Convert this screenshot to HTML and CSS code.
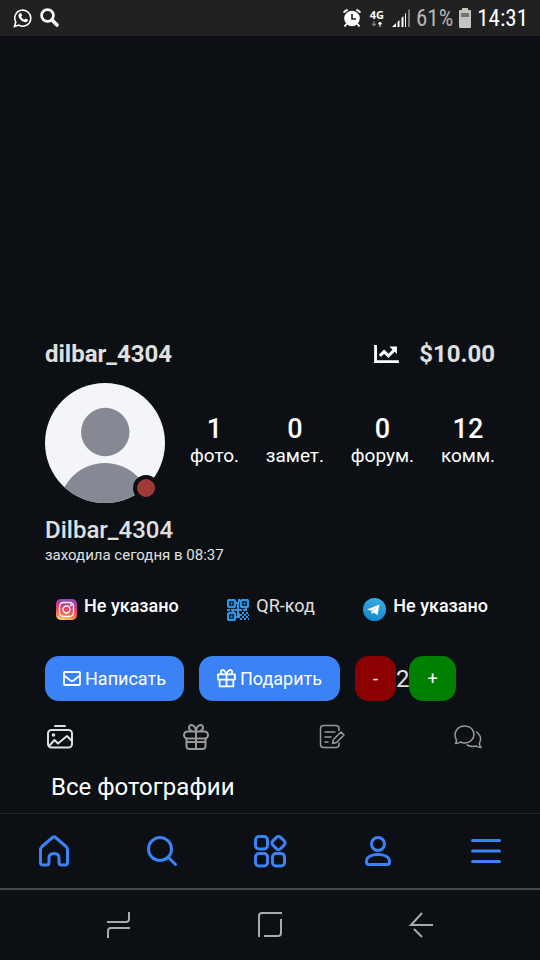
FILE: index.html
```html
<!DOCTYPE html>
<html lang="ru">
<head>
<meta charset="utf-8">
<meta name="viewport" content="width=device-width, initial-scale=1">
<title>dilbar_4304</title>
<link rel="stylesheet" href="styles.css">
</head>
<body>
<header class="status">
  <div class="status-group">
    <svg width="20" height="20" viewBox="0 0 20 20" fill="none" stroke="#fff" stroke-width="1.6"><path d="M1.500 18.500l1.300-4.400a8 8 0 1 1 3 3z"/><path d="M6.800 5.200l1.300-.2 1.100 2.600-1 1.100c.8 1.500 1.700 2.300 3.200 3l1.100-1.200 2.500 1.200c-.1 1.700-1.200 2.600-2.800 2.500C8.400 13.600 5.300 10.200 5.500 7c.1-.8.600-1.500 1.300-1.800z" fill="#fff" stroke="none"/></svg>
    <svg width="20" height="20" viewBox="0 0 20 20" fill="none" stroke="#fff"><circle cx="7.500" cy="7.500" r="5.900" stroke-width="2.700"/><path d="M12 12l5 5" stroke-width="3.700" stroke-linecap="round"/></svg>
  </div>
  <div class="status-group right">
    <svg width="20" height="20" viewBox="0 0 20 20"><circle cx="10" cy="10.500" r="7.800" fill="#fff"/><path d="M4.500 16l-2 2.500M15.500 16l2 2.500M1.500 4.500l4-3M18.500 4.500l-4-3" stroke="#fff" stroke-width="2"/><path d="M10 6v5h4" stroke="#212121" stroke-width="1.600" fill="none"/></svg>
    <div class="network"><span>4G</span>
      <svg width="12" height="6" viewBox="0 0 12 6"><path d="M3 0v3M1.500 3h3L3 5z" stroke="#888" fill="#888"/><path d="M9 6V3M7.500 3L9 1l1.500 2z" stroke="#fff" fill="#fff"/></svg>
    </div>
    <svg width="18" height="18" viewBox="0 0 18 18"><path d="M0 18l4-4v4zM5.500 13l2-2v7h-2zM9.500 9l2-2v11h-2zM13 5l1-1v14h-1z" fill="#fff"/><path d="M16 1l2-1v18h-2z" fill="#777"/></svg>
    <span class="percent">61%</span>
    <svg width="12" height="20" viewBox="0 0 12 20"><path d="M3 0h6v2h2q1 0 1 1v16q0 1-1 1H1q-1 0-1-1V3q0-1 1-1h2z" fill="#c4c4c4"/><path d="M2 5h8v4H2z" fill="#737373"/></svg>
    <time class="clock">14:31</time>
  </div>
</header>
<div class="cover"></div>
<main class="profile">
  <div class="title-row">
    <h1 class="login">dilbar_4304</h1>
    <a class="balance" href="#">
      <svg width="25" height="19" viewBox="0 0 26 20" fill="none" stroke="#fff"><path d="M1.500 0v17.500H26" stroke-width="3"/><path d="M6 11.500l4.500-4.500 4.500 4.500 6-6" stroke-width="3.200"/><path d="M16 1.500h8v8z" fill="#fff" stroke="none"/></svg>
      <span>$10.00</span>
    </a>
  </div>
  <div class="summary">
    <div class="avatar">
      <svg class="portrait" viewBox="0 0 120 120"><circle cx="60" cy="60" r="60" fill="#f3f5f8"/><clipPath id="face"><circle cx="60" cy="60" r="60"/></clipPath><g clip-path="url(#face)" fill="#848993"><circle cx="60.300" cy="49" r="24.200"/><circle cx="60" cy="126" r="46"/></g></svg>
      <span class="offline"></span>
    </div>
    <ul class="stats">
      <li><b>1</b><span>фото.</span></li>
      <li><b>0</b><span>замет.</span></li>
      <li><b>0</b><span>форум.</span></li>
      <li><b>12</b><span>комм.</span></li>
    </ul>
  </div>
  <h2 class="name">Dilbar_4304</h2>
  <p class="visited">заходила сегодня в 08:37</p>
  <div class="contacts">
    <a href="#">
      <svg width="21" height="21" viewBox="0 0 21 21"><defs><linearGradient id="igv" x1="0.600" y1="0" x2="0.400" y2="1"><stop offset="0" stop-color="#8a4bc4"/><stop offset=".35" stop-color="#d0387f"/><stop offset=".65" stop-color="#ee5a50"/><stop offset=".85" stop-color="#f9904a"/><stop offset="1" stop-color="#fed373"/></linearGradient></defs><rect width="21" height="21" rx="5" fill="url(#igv)"/><g fill="none" stroke="#fff" stroke-width="1.400"><rect x="3.500" y="3.500" width="14" height="14" rx="4"/><circle cx="10.500" cy="10.500" r="3.500"/></g><circle cx="14.800" cy="6.200" r="1" fill="#fff"/></svg>
      <span class="strong">Не указано</span>
    </a>
    <a href="#">
      <svg width="22" height="22" viewBox="0 0 22 22" fill="none" stroke="#3095e6" stroke-width="2"><rect x="1" y="1" width="7" height="7" rx="1.500" stroke-width="2.400"/><rect x="14" y="1" width="7" height="7" rx="1.500" stroke-width="2.400"/><rect x="1" y="14" width="7" height="7" rx="1.500" stroke-width="2.400"/><path d="M3.500 4.500h2M16.500 4.500h2M3.500 17.500h2M12 0v3M9 4h3M11 5v5M0 11h3M4 11h11M6 10v3M16 11h4M19 9v3M11 12v5M9 18h4M12 14v3M15 14h2M19 14h2M17 16h2M21 16h1M15 18h2M19 18h2M17 20h2M21 20h1M13 20h2M13 16h2"/></svg>
      <span>QR-код</span>
    </a>
    <a href="#">
      <svg width="23" height="23" viewBox="0 0 23 23"><defs><linearGradient id="tg" x1=".7" y1="0" x2=".4" y2="1"><stop offset="0" stop-color="#37aee2"/><stop offset="1" stop-color="#1687d0"/></linearGradient></defs><circle cx="11.500" cy="11.500" r="11.500" fill="url(#tg)"/><path d="M4 11.500L16.500 6.500 14.500 17.300 10.800 14.500 9 16.300 8.300 12.800z" fill="#fff"/><path d="M8.300 12.800l6-4-4.500 5L9 16.300z" fill="#b9d9ef"/></svg>
      <span class="strong">Не указано</span>
    </a>
  </div>
  <div class="actions">
    <button class="btn" type="button">
      <svg width="18" height="18" viewBox="0 0 18 18" fill="none" stroke="#fff" stroke-width="1.800" stroke-linejoin="round"><rect x="1" y="2" width="16" height="13" rx="1"/><path d="M1 5.500l6.500 5q1.500 1 3 0L17 5.500"/></svg>Написать</button>
    <button class="btn" type="button">
      <svg width="19" height="19" viewBox="0 0 18 18" fill="none" stroke="#fff" stroke-width="1.700" stroke-linejoin="round"><path d="M1 5h16v5H1zM2.500 10v6.500h13V10M9 5v11.500M9 5H5Q2.500 3 4.500 1.200 7 0 9 5q2-5 4.500-3.800Q15.500 3 13 5"/></svg>Подарить</button>
    <div class="rating">
      <button class="btn minus" type="button">-</button><output>2</output><button class="btn plus" type="button">+</button>
    </div>
  </div>
  <div class="tabs">
    <button type="button" class="tab current" aria-label="Фото"><svg viewBox="0 0 28 28"><rect x="2" y="7" width="24" height="17.500" rx="3.500"/><path d="M9 3h10M3 23l5.500-6 3.500 3.500L21 13l5 5"/><circle cx="7.500" cy="12" r=".8"/></svg></button>
    <button type="button" class="tab bold" aria-label="Подарки"><svg viewBox="0 0 28 28"><rect x="2" y="8.500" width="24" height="7" rx="3.500"/><path d="M4.500 16v7q0 3 3 3h13q3 0 3-3v-7M14 8.500V26M4.500 19h19M9.500 8C5.500 5.500 7 2 9.500 2 12.500 2 14 6 14 8c0-2 1.500-6 4.500-6 2.500 0 4 3.500 0 6"/></svg></button>
    <button type="button" class="tab" aria-label="Заметки"><svg viewBox="0 0 28 28"><path d="M21 7.500V5.500Q21 2.500 18 2.500H5.500q-3 0-3 3v16q0 3 3 3H18q3 0 3-3V20M7 9h10M7 14h6M7 19h3M15.500 16.500L23 9l3 3-7.500 7.500-4 1z"/></svg></button>
    <button type="button" class="tab" aria-label="Комментарии"><svg viewBox="0 0 28 28"><path d="M1.500 20.500c2-2 1-3-.2-6.500C0 8 4.500 3 10.500 3S20 7 20 11.500 16 20 10.500 20q-2 0-4-1-2 1.500-5 1.500zM22.500 9c4 3 5 7 3 11-.3 2 .3 3 1.500 4.500-2 0-3.500-.5-5-1.500-3 1-6 .5-9-1"/></svg></button>
  </div>
  <h3 class="section-title">Все фотографии</h3>
</main>
<nav class="appnav">
  <a href="#" aria-label="Главная"><svg viewBox="0 0 36 36"><path d="M4.500 17Q4.500 15 6 13.500L16.500 4.500q1.500-1.300 3 0L30 13.500q1.500 1.500 1.500 3.500v12.500q0 2.500-2.500 2.500h-3.500q-2.500 0-2.500-2.500V25q0-4.500-5-4.500T13 25v4.500q0 2.500-2.500 2.500H7q-2.500 0-2.500-2.500z"/></svg></a>
  <a href="#" aria-label="Поиск"><svg viewBox="0 0 36 36"><circle cx="16" cy="16" r="11.500"/><path d="M24.500 24.500l7 7"/></svg></a>
  <a href="#" aria-label="Разделы"><svg viewBox="0 0 36 36"><rect x="3.500" y="3.500" width="12" height="12.500" rx="3.500"/><rect x="3.500" y="20.500" width="12" height="12.500" rx="3.500"/><rect x="20.500" y="20.500" width="12" height="12.500" rx="3.500"/><rect x="21" y="4.500" width="11" height="11" rx="3" transform="rotate(45 26.500 10)"/></svg></a>
  <a href="#" aria-label="Профиль"><svg viewBox="0 0 36 36"><circle cx="18" cy="11" r="6.500"/><path d="M6.500 28.500c0-4.500 5-7 11.500-7s11.500 2.500 11.500 7v1q0 2-2.500 2H9q-2.500 0-2.500-2z"/></svg></a>
  <a href="#" aria-label="Меню"><svg viewBox="0 0 36 36"><path d="M4.500 7.500h27M4.500 18h27M4.500 28.500h27"/></svg></a>
</nav>
<footer class="sysnav">
  <button type="button" aria-label="Недавние"><svg viewBox="0 0 28 28"><path d="M3 11h19q3 0 3-3V1M26 17H7q-3 0-3 3v7"/></svg></button>
  <button type="button" aria-label="Домой"><svg viewBox="0 0 28 28"><path d="M3 26V5q0-3 3-3h20M8 25h14q3 0 3-3V8"/></svg></button>
  <button type="button" aria-label="Назад"><svg viewBox="0 0 28 28"><path d="M25 14H3L14 2M6 18l8 8"/></svg></button>
</footer>
</body>
</html>
```
FILE: styles.css
```css
* { box-sizing: border-box; }

body {
  margin: 0;
  min-height: 100vh;
  display: flex;
  flex-direction: column;
  background: #0c1015;
  color: #fff;
  font-family: Roboto, "Noto Sans", sans-serif;
}

svg { display: block; flex: none; }
h1, h2, h3, p, ul { margin: 0; padding: 0; }
a { color: inherit; text-decoration: none; }
button { margin: 0; padding: 0; border: 0; background: none; color: inherit; font: inherit; }

.status {
  display: flex;
  justify-content: space-between;
  align-items: center;
  height: 36px;
  padding: 0 12px 0 13px;
  background: #212121;
}
.status-group { display: flex; align-items: center; gap: 7px; }
.right { gap: 6px; }
.network { display: flex; flex-direction: column; align-items: center; gap: 1px; margin: 0 2px; font: bold 11px/11px "Open Sans", sans-serif; }
.percent, .clock { font-size: 23px; line-height: 36px; padding-top: 2px; font-family: "Roboto Condensed", Roboto, sans-serif; }
.percent { color: #b4b4b4; }

.cover { flex: 1; min-height: 120px; }

.profile { padding: 0 45px 9px; }

.title-row { display: flex; justify-content: space-between; align-items: center; color: #e0e0e0; font-size: 24px; line-height: 32px; }
.login { font-size: 24px; font-weight: 700; }
.balance { display: flex; align-items: center; gap: 20px; font-weight: 700; }

.summary { display: flex; align-items: center; gap: 25px; margin-top: 13px; }
.avatar { position: relative; width: 120px; height: 120px; flex: none; }
.portrait { width: 100%; height: 100%; }
.offline { position: absolute; right: 6px; bottom: 2px; width: 26px; height: 26px; border: 4px solid #0c1015; border-radius: 50%; background: #9f3a38; }
.stats { flex: 1; display: flex; justify-content: space-between; padding-bottom: 2px; list-style: none; text-align: center; }
.stats b, .stats span { display: block; }
.stats b { font-size: 27px; line-height: 28px; font-weight: 500; }
.stats span { font-size: 19px; line-height: 26px; }

.name { margin-top: 12px; color: #e0e0e0; font-size: 24px; line-height: 30px; font-weight: 500; }
.visited { color: #e0e0e0; font-size: 15px; line-height: 20px; }

.contacts { display: flex; justify-content: space-between; margin-top: 26px; padding: 0 7px 0 11px; font-size: 18px; line-height: 26px; color: #e0e0e0; }
.contacts a { display: flex; align-items: center; gap: 7px; }
.contacts svg { margin-top: 7px; }
.contacts .strong { color: #fff; font-weight: 500; }

.actions { display: flex; gap: 15px; margin-top: 35px; }
.btn { display: flex; align-items: center; gap: 4px; height: 45px; padding: 0 18px; border-radius: 14px; background: #3b82f6; font-size: 18px; }
.rating { display: flex; align-items: center; color: #e0e0e0; font-size: 24px; }
.minus { background: #8b0000; color: #fff; }
.plus { background: #008000; color: #fff; }

.tabs { display: flex; justify-content: space-between; margin-top: 22px; padding: 0 13px 0 1px; }
.tab { width: 28px; height: 28px; color: #999; }
.tab svg { width: 28px; height: 28px; fill: none; stroke: currentColor; stroke-width: 1.5; stroke-linecap: round; stroke-linejoin: round; }
.current { color: #e0e0e0; }
.tab.current svg, .tab.bold svg { stroke-width: 2; }

.section-title { margin-top: 19px; padding-left: 6px; font-size: 24px; line-height: 34px; font-weight: 400; }

.appnav { display: flex; height: 77px; border-top: 1px solid #20242a; border-bottom: 2px solid #484848; }
.appnav a { flex: 1; display: flex; align-items: center; justify-content: center; }
.appnav svg { width: 36px; height: 36px; fill: none; stroke: #3b82f6; stroke-width: 3; stroke-linecap: round; stroke-linejoin: round; }

.sysnav { display: flex; justify-content: space-around; align-items: center; height: 70px; padding: 0 42px; }
.sysnav svg { width: 28px; height: 28px; fill: none; stroke: #aaa; stroke-width: 2; }
```
